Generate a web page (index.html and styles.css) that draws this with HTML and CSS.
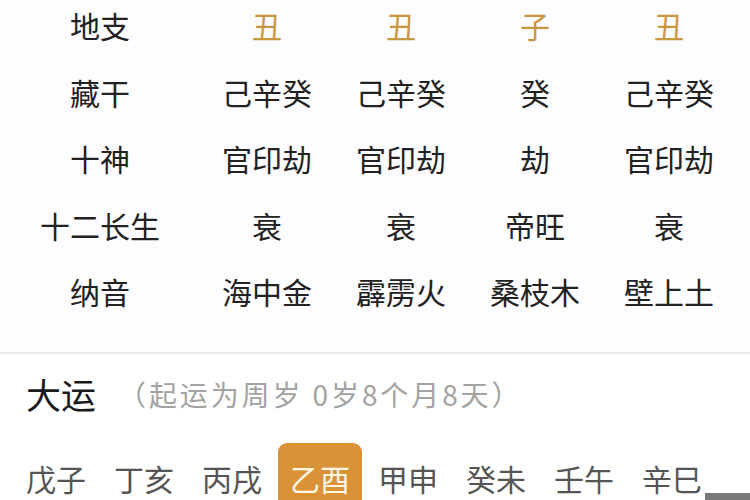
FILE: index.html
```html
<!DOCTYPE html>
<html lang="zh">
<head>
<meta charset="utf-8">
<link rel="stylesheet" href="styles.css">
</head>
<body>
<div class="page">
  <section class="chart">
    <div class="grid">
      <div class="label">地支</div><div class="gold">丑</div><div class="gold">丑</div><div class="gold">子</div><div class="gold">丑</div>
      <div class="label">藏干</div><div>己辛癸</div><div>己辛癸</div><div>癸</div><div>己辛癸</div>
      <div class="label">十神</div><div>官印劫</div><div>官印劫</div><div>劫</div><div>官印劫</div>
      <div class="label">十二长生</div><div>衰</div><div>衰</div><div>帝旺</div><div>衰</div>
      <div class="label">纳音</div><div>海中金</div><div>霹雳火</div><div>桑枝木</div><div>壁上土</div>
    </div>
  </section>
  <section class="dayun">
    <div class="head"><span class="title">大运</span><span class="sub">（起运为周岁 0岁8个月8天）</span></div>
    <div class="runs">
      <span class="run">戊子</span>
      <span class="run">丁亥</span>
      <span class="run">丙戌</span>
      <span class="run active">乙酉</span>
      <span class="run">甲申</span>
      <span class="run">癸未</span>
      <span class="run">壬午</span>
      <span class="run">辛巳</span>
    </div>
  </section>
  <div class="corner"></div>
</div>
</body>
</html>
```
FILE: styles.css
```css
html, body {
  margin: 0;
  padding: 0;
  background: #ffffff;
}
.page {
  position: relative;
  width: 750px;
  height: 500px;
  overflow: hidden;
  font-family: "Noto Sans CJK SC", "Noto Sans", sans-serif;
  color: #222;
}
.chart {
  background: #fdfcfe;
  border-bottom: 2px solid #ebeaee;
  padding-bottom: 27px;
}
.grid {
  display: grid;
  grid-template-columns: 200px repeat(4, 134px);
  grid-auto-rows: 66.5px;
  margin-top: -8px;
  font-size: 30px;
  font-weight: 400;
}
.grid > div {
  display: flex;
  align-items: center;
  justify-content: center;
  line-height: 1;
}
.gold {
  color: #c9973f;
}
.dayun {
  background: #fff;
}
.head {
  display: flex;
  align-items: center;
  padding-left: 26px;
  margin-top: 20px;
  height: 40px;
}
.title {
  font-size: 35px;
  font-weight: 400;
  color: #1a1a1a;
}
.sub {
  font-size: 28px;
  color: #a3a3a3;
  margin-left: 22px;
  letter-spacing: 2.9px;
}
.runs {
  display: flex;
  gap: 4px;
  padding-left: 14px;
  margin-top: 29px;
}
.run {
  display: flex;
  align-items: center;
  height: 70px;
  padding: 0 12px;
  font-size: 30px;
  color: #555;
  border-radius: 9px;
  line-height: 1;
}
.run.active {
  background: #d99236;
  color: #fff6e4;
}
.corner {
  position: absolute;
  left: 705px;
  top: 493px;
  width: 45px;
  height: 7px;
  background: #7a7a7a;
}
```
